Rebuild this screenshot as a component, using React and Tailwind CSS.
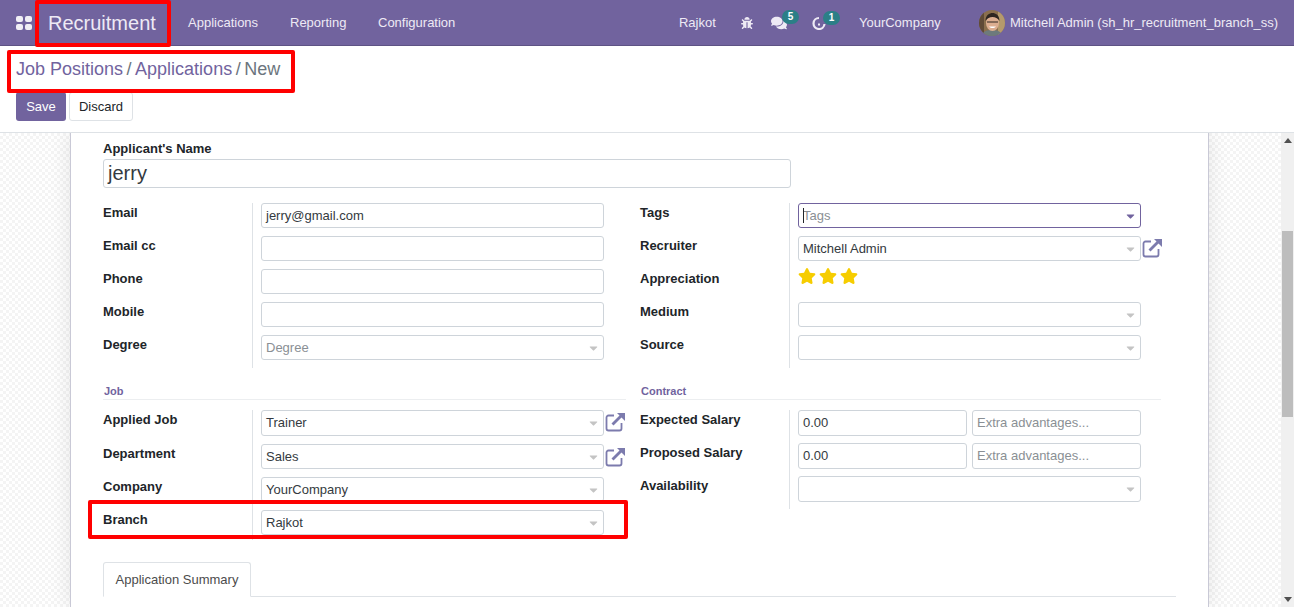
import { FaBug, FaComments, FaStar, FaCaretDown } from "react-icons/fa";

const ExternalLink = () => (
  <svg viewBox="0 0 20 20" className="w-[20px] h-[20px] shrink-0 text-[#7c7bad]" fill="none" stroke="currentColor">
    <path d="M9 3.500H3.500a2 2 0 0 0-2 2v11a2 2 0 0 0 2 2h11a2 2 0 0 0 2-2V11" strokeWidth="1.800" />
    <path d="M7.500 12.500L17 3" strokeWidth="2.800" />
    <path d="M12 1h8v8z" fill="currentColor" stroke="none" />
  </svg>
);

const Caret = ({ active }) => (
  <FaCaretDown className={`absolute right-[3px] top-1/2 -translate-y-1/2 text-[13px] ${active ? "text-[#71639e]" : "text-[#c4c4c4]"}`} />
);

const Field = ({ value, placeholder, select, h = "h-[25px]", active, children }) => (
  <div className="flex items-center">
    <div className={`relative w-[343px] ${h} rounded-[3px] border ${active ? "border-[#71639e]" : "border-[#ced4da]"} bg-white pl-[4px] flex items-center text-[13px]`}>
      {active && <span className="absolute left-[4px] top-[4px] h-[15px] w-px bg-[#212529]" />}
      {value ? <span className="text-[#343a40]">{value}</span> : <span className="text-[#8a8f94]">{placeholder}</span>}
      {select && <Caret active={active} />}
    </div>
    {children}
  </div>
);

const Label = ({ children, mb = "mb-[8px]", h = "h-[25px]" }) => (
  <div className={`${h} ${mb} text-[13px] font-bold text-[#212529] leading-[19px]`}>{children}</div>
);

const SalaryRow = ({ mb = "mb-[7px]" }) => (
  <div className={`flex gap-[5px] ${mb}`}>
    <div className="w-[169px] h-[26px] rounded-[3px] border border-[#ced4da] pl-[4px] flex items-center text-[13px] text-[#343a40]">0.00</div>
    <div className="w-[169px] h-[26px] rounded-[3px] border border-[#ced4da] pl-[4px] flex items-center text-[13px] text-[#8a8f94]">Extra advantages...</div>
  </div>
);

const SectionTitle = ({ children }) => (
  <div className="h-[18px] border-b border-[#eceef0] text-[11px] font-bold text-[#71639e] leading-[18px] pl-px">{children}</div>
);

const Badge = ({ children }) => (
  <span className="absolute -top-[5px] left-[11px] w-[17px] h-[14px] rounded-full bg-[#2b7f87] text-white text-[10px] font-bold leading-[13px] text-center">{children}</span>
);

const Avatar = () => (
  <svg viewBox="0 0 26 26" className="w-[26px] h-[26px] rounded-full shrink-0">
    <rect width="26" height="26" fill="#8a6f4d" />
    <rect x="19" width="7" height="26" fill="#b59a6c" />
    <rect width="5" height="26" fill="#5f4a36" />
    <path d="M2 26c2-5 6-6 11-6s9 1 11 6z" fill="#6d7a7c" />
    <ellipse cx="13.500" cy="13" rx="6.500" ry="8" fill="#dcae90" />
    <path d="M6.500 11c0-6 4-8 7-8s7 2 7 8c-2-3-4-4-7-4s-5 1-7 4z" fill="#2e2620" />
    <path d="M8 12h4M15 12h4M12 12h3" stroke="#2e2620" strokeWidth="1.200" />
    <path d="M10 16.500c2 2 5 2 7 0z" fill="#fff" />
  </svg>
);

const App = () => {
  return (
    <div className="relative h-[607px] w-[1294px] overflow-hidden flex flex-col bg-white font-['Liberation_Sans',Arial,sans-serif] text-[13px]">
      {/* Navbar */}
      <div className="h-[46px] shrink-0 bg-[#71639e] border-b border-[#5e5384] flex items-center text-[#eeeaf5]">
        <div className="ml-[16px] grid grid-cols-2 gap-[2px] w-[16px] h-[14px]">
          <span className="rounded-[2px] bg-white/90" />
          <span className="rounded-[2px] bg-white/90" />
          <span className="rounded-[2px] bg-white/90" />
          <span className="rounded-[2px] bg-white/90" />
        </div>
        <span className="ml-[16px] text-[20px] leading-none w-[140px]">Recruitment</span>
        <span className="w-[102px]">Applications</span>
        <span className="w-[88px]">Reporting</span>
        <span>Configuration</span>
        <div className="ml-auto flex items-center">
          <span className="w-[62px]">Rajkot</span>
          <FaBug className="text-[12px] w-[12px]" />
          <span className="relative ml-[18px]">
            <FaComments className="text-[16px]" />
            <Badge>5</Badge>
          </span>
          <span className="relative ml-[25px]">
            <svg viewBox="0 0 14 14" className="w-[14px] h-[14px]" fill="none" stroke="currentColor" strokeWidth="2.200">
              <path d="M7 2a5.500 5.500 0 1 0 5.500 6" />
              <path d="M6 8.500h2" />
            </svg>
            <Badge>1</Badge>
          </span>
          <span className="ml-[33px] w-[120px]">YourCompany</span>
          <Avatar />
          <span className="ml-[5px] mr-[16px]">Mitchell Admin (sh_hr_recruitment_branch_ss)</span>
        </div>
      </div>

      {/* Control panel */}
      <div className="h-[87px] shrink-0 border-b border-[#dee2e6] pl-[16px] pt-[9px]">
        <div className="flex gap-[3.500px] text-[18px] leading-[28px]">
          <span className="text-[#71639e]">Job Positions</span>
          <span className="text-[#6c757d]">/</span>
          <span className="text-[#71639e]">Applications</span>
          <span className="text-[#6c757d]">/</span>
          <span className="text-[#6c757d]">New</span>
        </div>
        <div className="flex gap-[3px] mt-[9px]">
          <button className="h-[29px] w-[50px] rounded-[3px] bg-[#71639e] text-white">Save</button>
          <button className="h-[29px] w-[64px] rounded-[3px] border border-[#dee2e6] bg-white text-[#212529]">Discard</button>
        </div>
      </div>

      {/* Content */}
      <div className="flex-1 flex min-h-0">
        <div className="flex-1 flex justify-center overflow-hidden pr-[2px] bg-[repeating-conic-gradient(#f4f4f4_0%_25%,#ffffff_0%_50%)] bg-[length:6px_6px]">
          <div className="w-[1139px] bg-white border-x border-[#c9c9d6] shadow-[0_0_20px_rgba(0,0,0,0.10)] pl-[32px] pr-[47px] pt-[8px]">
            <div className="text-[13px] font-bold text-[#212529] leading-[15px]">Applicant's Name</div>
            <div className="mt-[3px] w-[688px] h-[29px] rounded-[3px] border border-[#ced4da] pl-[4px] pb-[2px] flex items-center text-[20px] text-[#343a40]">jerry</div>

            {/* Contact groups */}
            <div className="grid grid-cols-[537px_1fr] mt-[15px]">
              <div className="flex">
                <div className="w-[149px] shrink-0">
                  <Label>Email</Label>
                  <Label>Email cc</Label>
                  <Label>Phone</Label>
                  <Label>Mobile</Label>
                  <Label mb="">Degree</Label>
                </div>
                <div className="border-l border-[#dee2e6] pl-[8px] flex flex-col gap-[8px] pb-[8px]">
                  <Field value="jerry@gmail.com" />
                  <Field />
                  <Field />
                  <Field />
                  <Field placeholder="Degree" select />
                </div>
              </div>
              <div className="flex">
                <div className="w-[149px] shrink-0">
                  <Label>Tags</Label>
                  <Label>Recruiter</Label>
                  <Label>Appreciation</Label>
                  <Label>Medium</Label>
                  <Label mb="">Source</Label>
                </div>
                <div className="border-l border-[#dee2e6] pl-[8px] flex flex-col gap-[8px] pb-[8px]">
                  <Field placeholder="Tags" select active />
                  <Field value="Mitchell Admin" select>
                    <span className="ml-[1px] -mt-px"><ExternalLink /></span>
                  </Field>
                  <div className="h-[25px] flex gap-[3px] text-[18px] text-[#f6cd00] pb-[11px] items-center">
                    <FaStar />
                    <FaStar />
                    <FaStar />
                  </div>
                  <Field select />
                  <Field select />
                </div>
              </div>
            </div>

            {/* Job / Contract */}
            <div className="grid grid-cols-[537px_1fr] mt-[14px]">
              <div className="pr-[14px]">
                <SectionTitle>Job</SectionTitle>
                <div className="flex mt-[10px]">
                  <div className="w-[149px] shrink-0">
                    <Label mb="mb-[9px]">Applied Job</Label>
                    <Label>Department</Label>
                    <Label>Company</Label>
                    <Label mb="">Branch</Label>
                  </div>
                  <div className="border-l border-[#dee2e6] pl-[8px] flex flex-col gap-[8px] pb-[5px]">
                    <Field value="Trainer" select h="h-[26px]">
                      <span className="ml-[1px] -mt-[2px]"><ExternalLink /></span>
                    </Field>
                    <Field value="Sales" select>
                      <span className="ml-[1px]"><ExternalLink /></span>
                    </Field>
                    <Field value="YourCompany" select />
                    <Field value="Rajkot" select />
                  </div>
                </div>
              </div>
              <div>
                <SectionTitle>Contract</SectionTitle>
                <div className="flex mt-[10px]">
                  <div className="w-[149px] shrink-0">
                    <Label>Expected Salary</Label>
                    <Label>Proposed Salary</Label>
                    <Label mb="">Availability</Label>
                  </div>
                  <div className="border-l border-[#dee2e6] pl-[8px] pb-[7px]">
                    <SalaryRow />
                    <SalaryRow />
                    <Field select h="h-[26px]" />
                  </div>
                </div>
              </div>
            </div>

            {/* Tabs */}
            <div className="mt-[22px] -mr-[15px] h-[35px] border-b border-[#dee2e6] flex">
              <div className="w-[148px] h-[35px] rounded-t-[3px] border border-b-white border-[#dee2e6] flex items-center justify-center text-[#4c4c4c]">
                Application Summary
              </div>
            </div>
          </div>
        </div>

        {/* Scrollbar */}
        <div className="w-[13px] shrink-0 bg-[#f0f0f0] flex flex-col items-center">
          <div className="mt-[5px] w-0 h-0 border-x-[4px] border-x-transparent border-b-[5px] border-b-[#505050]" />
          <div className="mt-[88px] w-[11px] h-[186px] bg-[#bdbdbd]" />
          <div className="mt-auto mb-[5px] w-0 h-0 border-x-[4px] border-x-transparent border-t-[5px] border-t-[#505050]" />
        </div>
      </div>

      {/* Red annotation boxes */}
      <div className="absolute left-[35px] top-0 w-[136px] h-[47px] border-[4px] border-[#ff0000] rounded-[2px]" />
      <div className="absolute left-[7px] top-[50px] w-[288px] h-[43px] border-[4px] border-[#ff0000] rounded-[2px]" />
      <div className="absolute left-[88px] top-[500px] w-[540px] h-[39px] border-[4px] border-[#ff0000] rounded-[2px]" />
    </div>
  );
};

export default App;
